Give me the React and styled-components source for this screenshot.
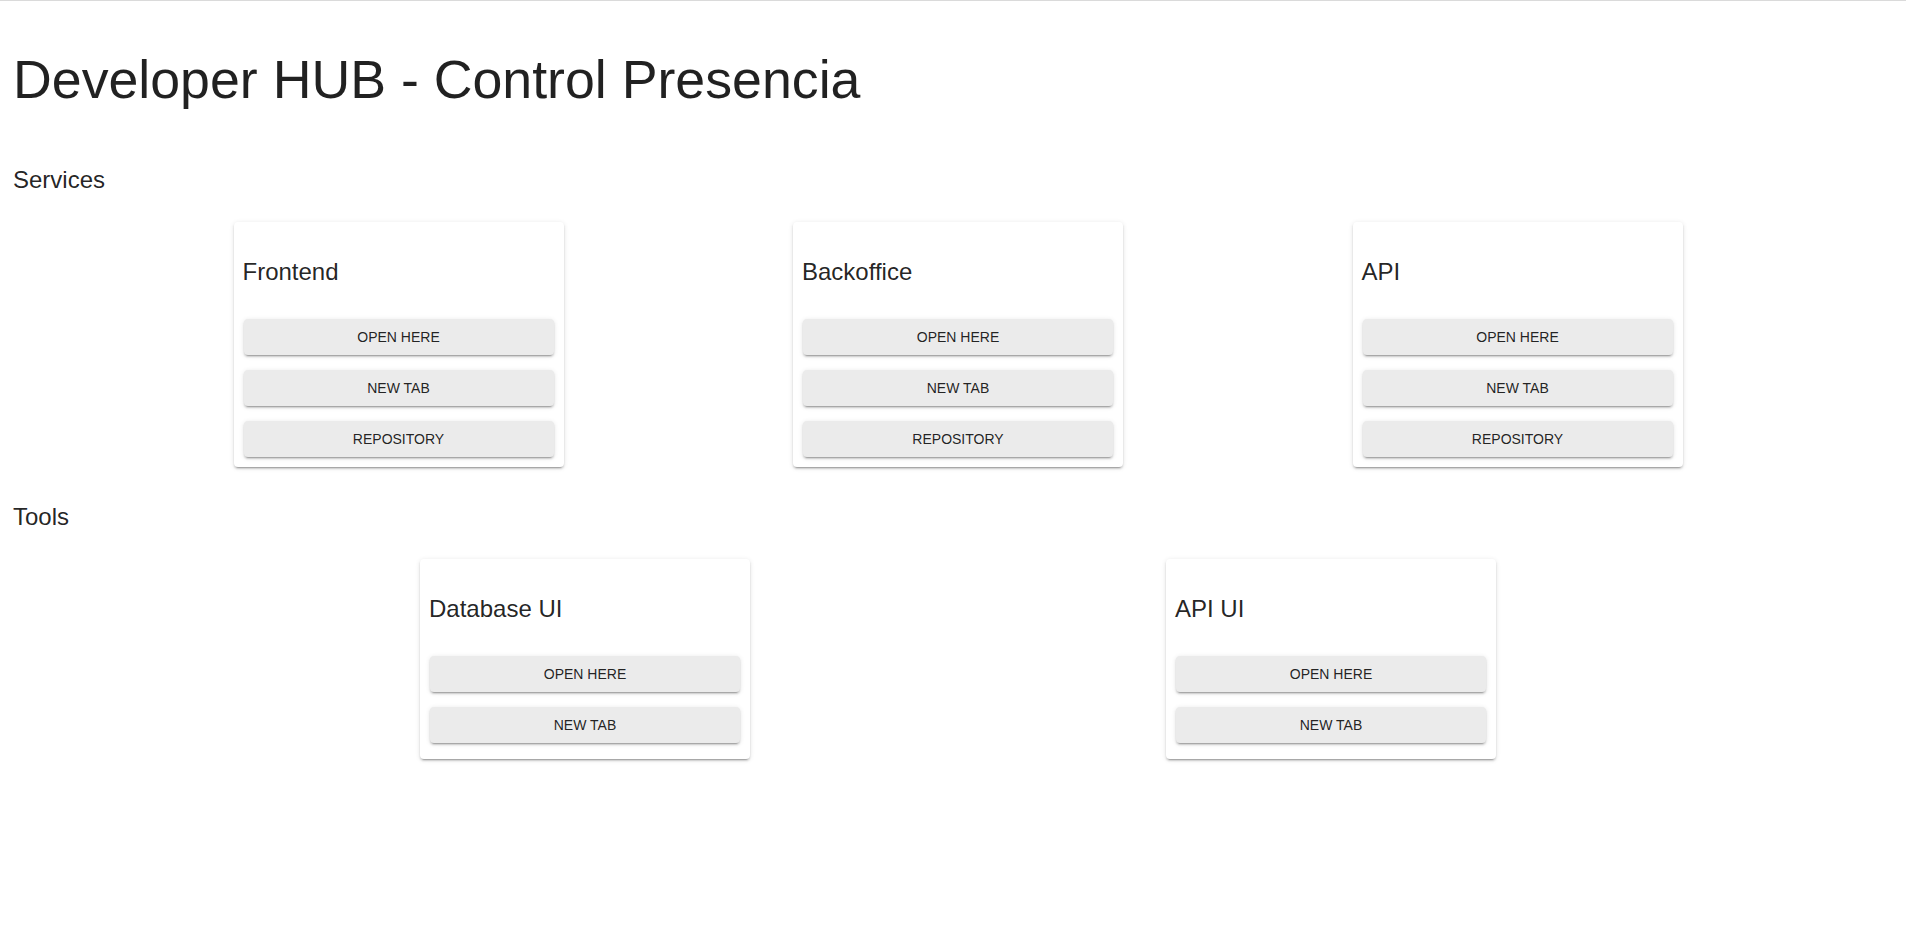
import React from 'react';
import styled, { createGlobalStyle } from 'styled-components';

const GlobalStyle = createGlobalStyle`
  html, body {
    margin: 0;
    padding: 0;
    background: #fff;
    overflow-x: hidden;
  }
  body {
    font-family: "Liberation Sans", Arial, sans-serif;
    color: rgba(0, 0, 0, 0.87);
  }
`;

const Page = styled.div`
  border-top: 1px solid #dadada;
  padding-bottom: 40px;
`;

const Title = styled.h1`
  margin: 51px 0 0 13px;
  font-size: 53.7px;
  line-height: 54px;
  font-weight: 400;
`;

const SectionTitle = styled.h2`
  margin: ${p => (p.first ? '62px' : '38px')} 0 0 13px;
  font-size: 24px;
  line-height: 24px;
  font-weight: 400;
`;

const CardRow = styled.div`
  display: flex;
  justify-content: space-evenly;
  margin: 30px -6px 0 4px;
`;

const Card = styled.div`
  width: 330px;
  box-sizing: border-box;
  padding: 38px 10px ${p => p.bottom}px;
  background: #fff;
  border-radius: 4px;
  box-shadow: 0px 3px 1px -2px rgba(0, 0, 0, 0.2),
    0px 2px 2px 0px rgba(0, 0, 0, 0.14),
    0px 1px 5px 0px rgba(0, 0, 0, 0.12);
`;

const CardTitle = styled.div`
  font-size: 24px;
  line-height: 24px;
  margin: 0 0 35px -1px;
`;

const Actions = styled.div`
  display: flex;
  flex-direction: column;
  gap: 15px;
`;

const ActionButton = styled.button`
  height: 36px;
  width: 100%;
  border: none;
  border-radius: 4px;
  background: #ebebeb;
  color: rgba(0, 0, 0, 0.87);
  font-family: "Liberation Sans", Arial, sans-serif;
  font-size: 14px;
  text-transform: uppercase;
  cursor: pointer;
  box-shadow: 0px 3px 1px -2px rgba(0, 0, 0, 0.2),
    0px 2px 2px 0px rgba(0, 0, 0, 0.14),
    0px 1px 5px 0px rgba(0, 0, 0, 0.12);
`;

const services = [
  { name: 'Frontend', repo: true },
  { name: 'Backoffice', repo: true },
  { name: 'API', repo: true },
];

const tools = [
  { name: 'Database UI', repo: false },
  { name: 'API UI', repo: false },
];

const HubCard = ({ item, bottom }) => (
  <Card bottom={bottom}>
    <CardTitle>{item.name}</CardTitle>
    <Actions>
      <ActionButton>Open here</ActionButton>
      <ActionButton>New tab</ActionButton>
      {item.repo && <ActionButton>Repository</ActionButton>}
    </Actions>
  </Card>
);

const App = () => (
  <Page>
    <GlobalStyle />
    <Title>Developer HUB - Control Presencia</Title>

    <SectionTitle first>Services</SectionTitle>
    <CardRow>
      {services.map(s => (
        <HubCard key={s.name} item={s} bottom={10} />
      ))}
    </CardRow>

    <SectionTitle>Tools</SectionTitle>
    <CardRow>
      {tools.map(t => (
        <HubCard key={t.name} item={t} bottom={16} />
      ))}
    </CardRow>
  </Page>
);

export default App;
